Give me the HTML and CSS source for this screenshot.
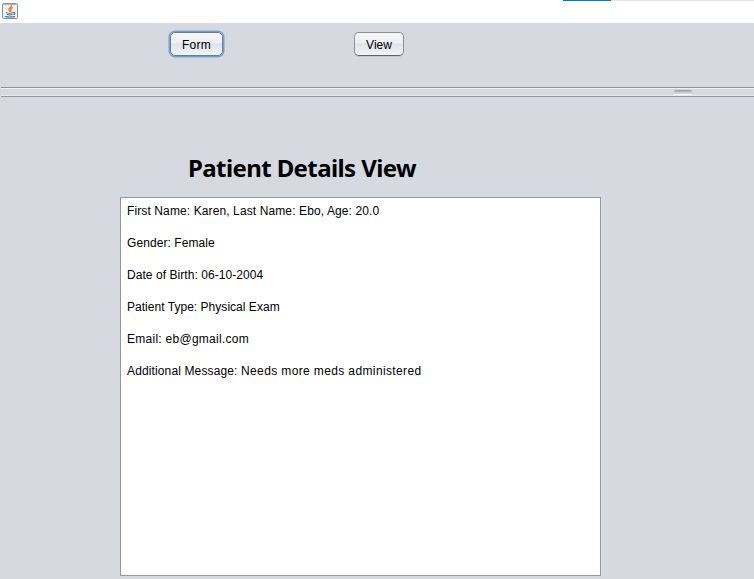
FILE: index.html
```
<!DOCTYPE html>
<html lang="en">
<head>
<meta charset="utf-8">
<title>Patient Details View</title>
<link rel="stylesheet" href="styles.css">
</head>
<body>
<header class="titlebar">
  <svg class="java" width="16" height="16" viewBox="0 0 16 16">
    <rect x=".5" y=".5" width="15" height="15" rx="1" fill="#edf2f5" stroke="#7b929f"/>
    <path d="M1 1.500h14" stroke="#a9bac6"/>
    <path d="M9.500 2c.6 2.200-4 3-2.500 5.200L8.200 9M10.800 4.500C8.500 5.300 8 6.200 9 7.500c.3.600 0 1.100-.4 1.500" fill="none" stroke="#ee7d2c" stroke-width="1.400"/>
    <path d="M4 9.800c1.500.6 5.500.6 7 0M5 11.600c1.500.5 4 .5 5.500 0M3 13.500c2 .7 8 .7 10 0M11 9.800c2.700-.7 2.700 1.500.3 2" fill="none" stroke="#426f96" stroke-width="1.100"/>
  </svg>
</header>
<nav class="toolbar">
  <button class="button focused">Form</button>
  <button class="button view">View</button>
</nav>
<div class="divider"><span class="grip"></span></div>
<main class="content">
  <h1>Patient Details View</h1>
  <section class="details">
    <p class="name">First Name: Karen, Last Name: Ebo, Age: 20.0</p>
    <p class="gender">Gender: Female</p>
    <p class="birth">Date of Birth: 06-10-2004</p>
    <p class="type">Patient Type: Physical Exam</p>
    <p class="email">Email: eb@gmail.com</p>
    <p class="message">Additional Message: <span class="note">Needs more meds administered</span></p>
  </section>
</main>
</body>
</html>
```
FILE: styles.css
```
* { box-sizing: border-box; }
body {
  margin: 0;
  width: 754px;
  height: 579px;
  overflow: hidden;
  background: #d6d9e0;
  color: #000;
  font: 12px/16px "Liberation Sans", Arial, sans-serif;
}
.titlebar {
  height: 23px;
  padding: 3px 2px;
  background: linear-gradient(90deg, #fff 563px, #0078d7 563px, #0078d7 611px, #e5e5e5 611px) top / 100% 1px no-repeat #fff;
}
.java { display: block; }
.toolbar {
  display: flex;
  height: 64px;
  padding: 9px 0 0 170px;
}
.button {
  width: 50px;
  height: 24px;
  padding: 1px 0 0;
  border: 1px solid #8d9097;
  border-bottom-color: #5f636b;
  border-radius: 5px;
  background: linear-gradient(#f8f9fa, #eceef1 45%, #dfe2e6 50%, #f3f5fa);
  box-shadow: 0 1px 0 #c4c8cf;
  font: 12px/16px "Liberation Sans", Arial, sans-serif;
  color: #000;
}
.focused {
  width: 53px;
  border-color: #65809e;
  box-shadow: 0 0 0 1.5px #73a4d1;
  letter-spacing: 0.2px;
}
.view { margin-left: 131px; }
.divider {
  height: 10px;
  margin-left: 1px;
  padding: 2px 0 0 673px;
  border-top: 1px solid #8e9199;
  border-bottom: 1px solid #9297a1;
  background: #d6d9de;
  box-shadow: inset 0 1px #eceff5, inset 0 -1px #e5eaf2;
}
.grip {
  display: block;
  width: 18px;
  height: 5px;
  border-radius: 2px 2px 0 0;
  background: linear-gradient(#999ea8 1px, #a9adb6 1px, #b9bdc6 2px, #cdd0d6 2px, #cdd0d6 4px, #fff 4px);
}
.content { padding: 54px 0 0 120px; }
h1 {
  height: 46px;
  margin: 0;
  padding-left: 68px;
  font: 700 24px/34px "Noto Sans", sans-serif;
  letter-spacing: -0.6px;
  white-space: nowrap;
}
.details {
  width: 481px;
  height: 379px;
  padding: 5px 6px;
  border: 1px solid #9297a1;
  background: #fff;
}
.details p {
  margin: 0 0 16px;
  white-space: nowrap;
}
.name { letter-spacing: 0.11px; }
.gender { letter-spacing: 0.07px; }
.birth { letter-spacing: 0.06px; }
.type { letter-spacing: 0.03px; }
.email { letter-spacing: 0.27px; }
.message { letter-spacing: 0.13px; }
.note { letter-spacing: 0.375px; }
```
